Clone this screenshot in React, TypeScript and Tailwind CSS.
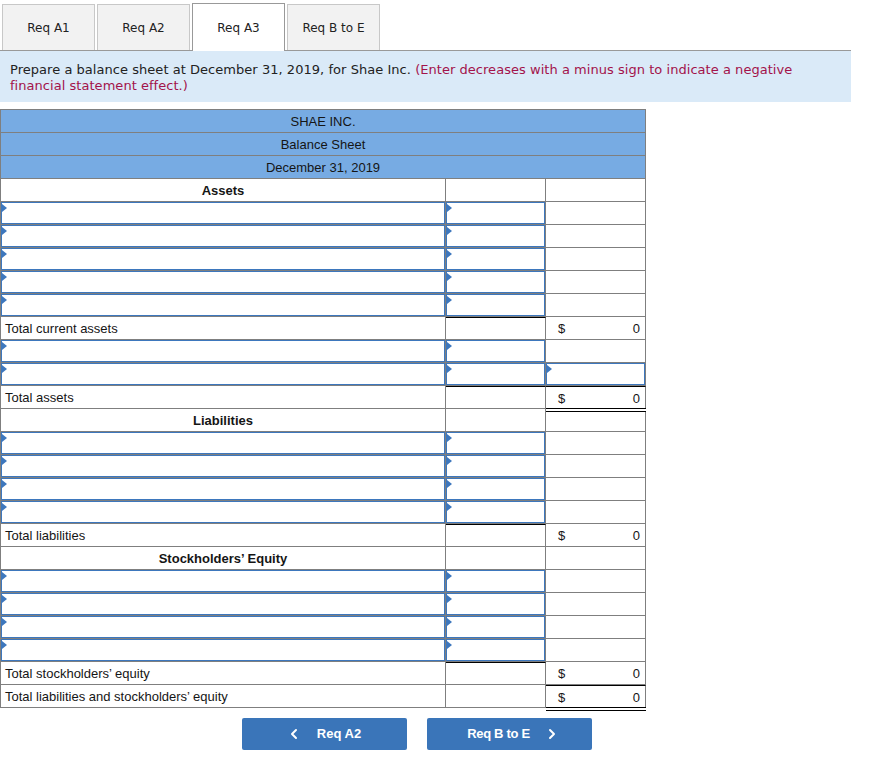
import { ChevronLeft, ChevronRight } from 'lucide-react'

type Row =
  | { kind: 'section'; label: string }
  | { kind: 'input'; col3?: boolean }
  | { kind: 'total'; label: string; line2?: boolean; line3?: boolean; double?: boolean }

const rows: Row[] = [
  { kind: 'section', label: 'Assets' },
  { kind: 'input' },
  { kind: 'input' },
  { kind: 'input' },
  { kind: 'input' },
  { kind: 'input' },
  { kind: 'total', label: 'Total current assets', line2: true },
  { kind: 'input' },
  { kind: 'input', col3: true },
  { kind: 'total', label: 'Total assets', line2: true, line3: true, double: true },
  { kind: 'section', label: 'Liabilities' },
  { kind: 'input' },
  { kind: 'input' },
  { kind: 'input' },
  { kind: 'input' },
  { kind: 'total', label: 'Total liabilities', line2: true },
  { kind: 'section', label: 'Stockholders’ Equity' },
  { kind: 'input' },
  { kind: 'input' },
  { kind: 'input' },
  { kind: 'input' },
  { kind: 'total', label: 'Total stockholders’ equity', line2: true },
  { kind: 'total', label: 'Total liabilities and stockholders’ equity', line3: true, double: true },
]

const tabs = ['Req A1', 'Req A2', 'Req A3', 'Req B to E']

// 入力欄（左上に小さな三角）
const InputBox = () => (
  <div className="relative h-full w-full border border-[#3d77bd] bg-white">
    <span className="absolute left-0 top-[1px] h-0 w-0 border-y-[4px] border-l-[5px] border-y-transparent border-l-[#3d77bd]" />
  </div>
)

const Cell = ({ w, children, className = '' }: { w: string; children?: React.ReactNode; className?: string }) => (
  <div className={`${w} h-full shrink-0 border-r border-[#7f7f7f] ${className}`}>{children}</div>
)

const App = () => {
  return (
    <div className="w-[891px] min-h-[784px] bg-white pt-[3px] text-[#222]">
      {/* タブ */}
      <div className="flex w-[851px] gap-[2px] border-b border-[#999] pl-[2px] font-['DejaVu_Sans',sans-serif] text-[12px]">
        {tabs.map((t) => (
          <div
            key={t}
            className={
              t === 'Req A3'
                ? '-mb-px flex h-[48px] w-[93px] items-center justify-center border border-b-0 border-[#999] bg-white'
                : 'mt-[1px] flex h-[46px] w-[93px] items-center justify-center border border-b-0 border-[#c8c8c8] bg-[#f2f2f2]'
            }
          >
            {t}
          </div>
        ))}
      </div>

      {/* 指示 */}
      <div className="w-[851px] bg-[#daeaf8] px-[10px] pb-[8px] pt-[11px] font-['DejaVu_Sans',sans-serif] text-[13px] leading-4 tracking-[0.04px]">
        Prepare a balance sheet at December 31, 2019, for Shae Inc.{' '}
        <span className="text-[#a3134b]">
          (Enter decreases with a minus sign to indicate a negative financial statement effect.)
        </span>
      </div>

      {/* 貸借対照表 */}
      <div className="mt-[7px] w-[646px] border-l border-t border-[#7f7f7f] font-['Liberation_Sans',Arial,sans-serif] text-[13px] text-[#151515]">
        {['SHAE INC.', 'Balance Sheet', 'December 31, 2019'].map((h) => (
          <div
            key={h}
            className="flex h-[23px] items-center justify-center border-b border-r border-[#7f7f7f] bg-[#77abe3] pt-px"
          >
            {h}
          </div>
        ))}

        {rows.map((r, i) => (
          <div key={i} className="flex h-[23px] border-b border-[#7f7f7f]">
            {r.kind === 'section' && (
              <>
                <Cell w="w-[445px]" className="flex items-center justify-center pt-px font-bold">
                  {r.label}
                </Cell>
                <Cell w="w-[100px]" />
                <Cell w="w-[100px]" />
              </>
            )}
            {r.kind === 'input' && (
              <>
                <Cell w="w-[445px]">
                  <InputBox />
                </Cell>
                <Cell w="w-[100px]">
                  <InputBox />
                </Cell>
                <Cell w="w-[100px]">{r.col3 && <InputBox />}</Cell>
              </>
            )}
            {r.kind === 'total' && (
              <>
                <Cell w="w-[445px]" className="flex items-center pl-[4px] pt-[2px]">
                  {r.label}
                </Cell>
                <Cell w="w-[100px]" className={r.line2 ? 'border-t border-t-black' : ''} />
                <Cell
                  w="w-[100px]"
                  className={`relative flex items-center justify-between pl-[12px] pr-[5px] pt-[2px] ${r.line3 ? 'border-t border-t-black' : ''}`}
                >
                  <span>$</span>
                  <span>0</span>
                  {r.double && (
                    <span className="absolute bottom-[-4px] left-0 right-[-1px] h-[4px] border-y border-black bg-white" />
                  )}
                </Cell>
              </>
            )}
          </div>
        ))}
      </div>

      {/* ナビゲーション */}
      <div className="ml-[242px] mt-[10px] flex gap-[20px] font-['Liberation_Sans',Arial,sans-serif] text-[13px] font-bold text-white">
        <button className="flex h-[32px] w-[165px] items-center justify-center gap-[15px] rounded-[2px] bg-[#3a75b9] pr-[2px]">
          <ChevronLeft size={16} strokeWidth={3} />
          Req A2
        </button>
        <button className="flex h-[32px] w-[165px] items-center justify-center gap-[14px] rounded-[2px] bg-[#3a75b9] pl-[8px]">
          <span className="tracking-[-0.3px]">Req B to E</span>
          <ChevronRight size={16} strokeWidth={3} />
        </button>
      </div>
    </div>
  )
}

export default App
